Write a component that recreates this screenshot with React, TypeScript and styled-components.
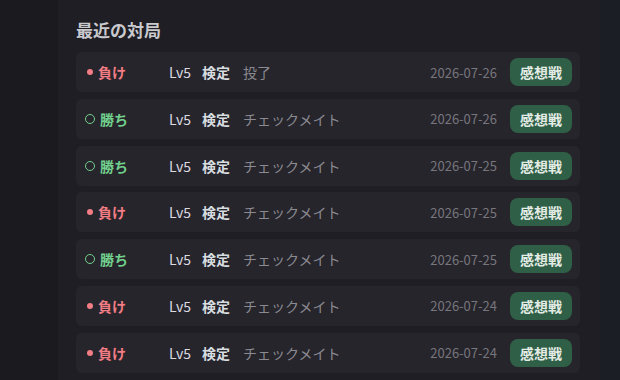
import React from "react";
import styled, { createGlobalStyle } from "styled-components";

const Global = createGlobalStyle`
  html, body {
    margin: 0;
    padding: 0;
    background: #1a1a1f;
    font-family: "Noto Sans CJK JP", "Noto Sans", sans-serif;
  }
`;

const Page = styled.div`
  display: flex;
  height: 380px;
  overflow: hidden;
  background: #1a1a1f;
`;
const Side = styled.div`
  width: 58px;
  flex-shrink: 0;
`;
const Panel = styled.section`
  width: 542px;
  flex-shrink: 0;
  background: #1f1e24;
  padding: 17px 20px 0 18px;
  box-sizing: border-box;
`;
const Right = styled.div`
  flex: 1;
  background: #1c1e25;
`;
const Title = styled.h2`
  margin: 0 0 10px;
  font-size: 17px;
  line-height: 25px;
  font-weight: 700;
  color: #c9c9ce;
`;
const List = styled.div`
  display: flex;
  flex-direction: column;
  gap: 6.8px;
`;
const Row = styled.div`
  display: flex;
  align-items: center;
  height: 40px;
  padding: 0 8px 0 9px;
  background: #26252c;
  border-radius: 6px;
  font-size: 14px;
`;
const Result = styled.span<{ $win: boolean }>`
  display: flex;
  align-items: center;
  gap: 5px;
  width: 84px;
  font-weight: 700;
  color: ${(p) => (p.$win ? "#72d08d" : "#f27d84")};
`;
const Dot = styled.span`
  width: 6px;
  height: 6px;
  margin: 0 0 0 2px;
  border-radius: 50%;
  background: #f27d84;
`;
const Ring = styled.span`
  width: 8px;
  height: 8px;
  border: 1.5px solid #72d08d;
  border-radius: 50%;
`;
const Level = styled.span`
  color: #dcdce0;
  margin-right: 11px;
`;
const Kind = styled.span`
  color: #d8dde0;
  font-weight: 700;
  margin-right: 13px;
`;
const Reason = styled.span`
  flex: 1;
  color: #8b8a91;
`;
const Date = styled.span`
  color: #77767d;
  font-size: 13px;
  margin-right: 13px;
`;
const Review = styled.button`
  height: 28px;
  width: 62px;
  border: none;
  border-radius: 8px;
  background: #2f5f46;
  color: #e3ece5;
  font-family: inherit;
  font-size: 14px;
  font-weight: 700;
  cursor: pointer;
`;

const games = [
  { win: false, reason: "投了", date: "2026-07-26" },
  { win: true, reason: "チェックメイト", date: "2026-07-26" },
  { win: true, reason: "チェックメイト", date: "2026-07-25" },
  { win: false, reason: "チェックメイト", date: "2026-07-25" },
  { win: true, reason: "チェックメイト", date: "2026-07-25" },
  { win: false, reason: "チェックメイト", date: "2026-07-24" },
  { win: false, reason: "チェックメイト", date: "2026-07-24" },
];

export default function App() {
  return (
    <>
      <Global />
      <Page>
        <Side />
        <Panel>
          <Title>最近の対局</Title>
          <List>
            {games.map((g, i) => (
              <Row key={i}>
                <Result $win={g.win}>
                  {g.win ? <Ring /> : <Dot />}
                  {g.win ? "勝ち" : "負け"}
                </Result>
                <Level>Lv5</Level>
                <Kind>検定</Kind>
                <Reason>{g.reason}</Reason>
                <Date>{g.date}</Date>
                <Review>感想戦</Review>
              </Row>
            ))}
          </List>
        </Panel>
        <Right />
      </Page>
    </>
  );
}
